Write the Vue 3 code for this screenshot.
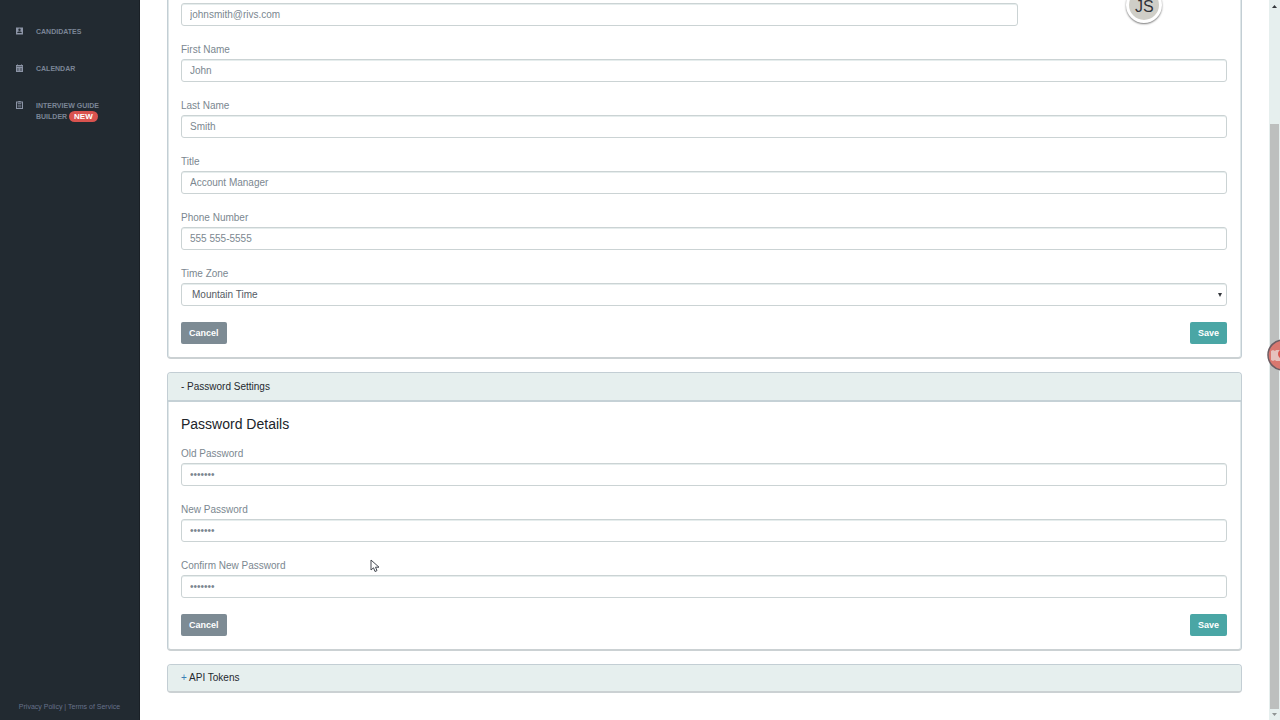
<script setup>
import { reactive } from 'vue'

const profile = reactive({
  email: 'johnsmith@rivs.com',
  zone: 'Mountain Time',
})
const fields = reactive([
  { id: 'first-name', label: 'First Name', value: 'John' },
  { id: 'last-name', label: 'Last Name', value: 'Smith' },
  { id: 'title', label: 'Title', value: 'Account Manager' },
  { id: 'phone', label: 'Phone Number', value: '555 555-5555' },
])
const passwords = reactive([
  { id: 'old-password', label: 'Old Password', value: 'passwor' },
  { id: 'new-password', label: 'New Password', value: 'passwor' },
  { id: 'confirm-password', label: 'Confirm New Password', value: 'passwor' },
])
</script>

<template>
  <div class="app">
    <aside class="sidebar">
      <nav class="nav">
        <a href="#candidates" class="nav-link">
          <svg class="nav-icon" viewBox="0 0 7 8">
            <path fill-rule="evenodd" d="M0 .5h7v7H0zM3.5 1.5a1.2 1.2 0 1 0 0 2.4 1.2 1.2 0 0 0 0-2.4M1.3 6h4.4v-.5c0-1.4-4.4-1.4-4.4 0z" />
          </svg>
          <span>CANDIDATES</span>
        </a>
        <a href="#calendar" class="nav-link">
          <svg class="nav-icon" viewBox="0 0 7 8">
            <path fill-rule="evenodd" d="M0 1h1V.4h1V1h3V.4h1V1h1v7H0zM.7 2.3v.4h5.6v-.4zM1.4 4v3h.4V4zm1.3 0v3h.4V4zm1.3 0v3h.4V4zm1.3 0v3h.4V4z" />
          </svg>
          <span>CALENDAR</span>
        </a>
        <a href="#guide" class="nav-link">
          <svg class="nav-icon" viewBox="0 0 7 8">
            <path fill-rule="evenodd" d="M0 .6h2.3a1.2 1.2 0 0 1 2.4 0H7V8H0zM1 1.600v5.400h5V1.600zM1.700 2.200h3.600v.8H1.700zm0 1.600h3.600v.8H1.700zm0 1.600h3.600v.8H1.700z" />
          </svg>
          <span>INTERVIEW GUIDE<br />BUILDER <span class="badge">NEW</span></span>
        </a>
      </nav>
      <footer class="legal">
        <a href="#privacy">Privacy Policy</a> | <a href="#terms">Terms of Service</a>
      </footer>
    </aside>

    <main class="content">
      <form class="card profile" @submit.prevent>
        <div class="email-row">
          <input v-model="profile.email" class="control email" type="email" aria-label="Email" />
          <div class="avatar-cell"><span class="avatar">JS</span></div>
        </div>
        <div v-for="f in fields" :key="f.id" class="field">
          <label :for="f.id">{{ f.label }}</label>
          <input :id="f.id" v-model="f.value" class="control" type="text" />
        </div>
        <div class="field">
          <label for="zone">Time Zone</label>
          <div class="select-wrap">
            <select id="zone" v-model="profile.zone" class="control zone">
              <option>Mountain Time</option>
            </select>
            <svg class="caret" viewBox="0 0 4 4"><path d="M0 0h4L2 4z" /></svg>
          </div>
        </div>
        <div class="actions">
          <button type="button" class="btn cancel">Cancel</button>
          <button type="submit" class="btn save">Save</button>
        </div>
      </form>

      <section class="card">
        <button type="button" class="card-head" aria-expanded="true">- Password Settings</button>
        <form class="card-body" @submit.prevent>
          <h2>Password Details</h2>
          <div v-for="p in passwords" :key="p.id" class="field">
            <label :for="p.id">{{ p.label }}</label>
            <input :id="p.id" v-model="p.value" class="control" type="password" />
          </div>
          <div class="actions">
            <button type="button" class="btn cancel">Cancel</button>
            <button type="submit" class="btn save">Save</button>
          </div>
        </form>
      </section>

      <section class="card closed">
        <button type="button" class="card-head" aria-expanded="false"><span class="plus">+</span> API Tokens</button>
      </section>
    </main>

    <div class="scrollbar">
      <svg class="arrow" viewBox="0 0 5 3"><path d="M0 3h5L2.5 0z" /></svg>
      <div class="track"><div class="thumb"></div></div>
      <svg class="arrow down" viewBox="0 0 5 3"><path d="M0 0h5L2.5 3z" /></svg>
    </div>

    <svg class="recorder" viewBox="0 0 32 32">
      <circle cx="16" cy="16" r="15" fill="#d9776f" stroke="#6b5d63" stroke-width="1.5" />
      <path d="M4 12l2-1 2 1 1-1h12v11H9l-1-1-2 1-2-1z" fill="#e5c2be" />
      <circle cx="16" cy="15" r="4" fill="#e5c2be" stroke="#d8564f" stroke-width="2" />
    </svg>
    <svg class="pointer" viewBox="0 0 10 14">
      <path d="M1 1v10l2.5-2.2L5 12.5l2-.9-1.5-3.400H9z" fill="#fff" stroke="#444951" stroke-width="1" />
    </svg>
  </div>
</template>

<style>
body {
  background: #fff;
  overflow: hidden;
}
</style>

<style scoped>
.app {
  position: relative;
  display: flex;
  height: 100vh;
  overflow: hidden;
  font: 10px/16px "Liberation Sans", Arial, sans-serif;
  color: #7b8790;
}
.app * {
  box-sizing: border-box;
}
.sidebar {
  width: 140px;
  flex: none;
  display: flex;
  flex-direction: column;
  justify-content: space-between;
  background: #222a31;
  border-right: 1px solid #1a2026;
  padding: 26px 16px 8px;
}
.nav {
  display: flex;
  flex-direction: column;
  gap: 26px;
}
.nav-link {
  display: flex;
  align-items: flex-start;
  gap: 13px;
  color: #7b8596;
  font-size: 7px;
  font-weight: 700;
  line-height: 11px;
  text-decoration: none;
}
.nav-icon {
  width: 7px;
  height: 8px;
  flex: none;
  margin-top: 1px;
  fill: #8c94a6;
}
.badge {
  display: inline-block;
  padding: 0 5px;
  border-radius: 6px;
  background: #d9534f;
  color: #fff;
  font-size: 8px;
  line-height: 11px;
}
.legal {
  font-size: 7px;
  line-height: 10px;
  text-align: center;
  white-space: nowrap;
  color: #66718a;
}
.legal a {
  color: inherit;
  text-decoration: none;
}
.content {
  flex: 1;
  min-width: 0;
  padding: 0 27px;
}
.card {
  margin-bottom: 13px;
  border: 1px solid #c3ced4;
  border-bottom: 2px solid #cbd1d3;
  border-radius: 4px;
  box-shadow: inset 1px 0 0 #dfe7e9, inset -1px 0 0 #dfe7e9;
}
.profile {
  padding: 3px 14px 13px 13px;
  border-top: 0;
  border-radius: 0 0 4px 4px;
}
.email-row {
  display: flex;
  margin-bottom: 16px;
}
.email-row .email {
  width: 80%;
}
.avatar-cell {
  flex: 1;
  display: flex;
  justify-content: center;
  padding-left: 44px;
  height: 23px;
}
.avatar {
  width: 36px;
  height: 36px;
  flex: none;
  margin-top: -16px;
  border: 3px solid #fff;
  border-radius: 50%;
  background: #cfcec7;
  box-shadow: 0 1px 2px #777;
  color: #303138;
  font-size: 16px;
  line-height: 34px;
  text-align: center;
}
.field {
  display: flex;
  flex-direction: column;
  gap: 1px;
  margin-bottom: 16px;
}
.field label {
  align-self: flex-start;
}
.control {
  width: 100%;
  height: 23px;
  margin: 0;
  padding: 0 8px;
  border: 1px solid #cbd3d4;
  border-radius: 3px;
  background: #fff;
  box-shadow: inset 0 1px 0 #e6eded;
  color: #7b8790;
  font: inherit;
  outline: none;
}
.select-wrap {
  position: relative;
  display: flex;
}
.zone {
  appearance: none;
  padding-left: 10px;
  color: #555b64;
}
.caret {
  position: absolute;
  top: 10px;
  right: 5px;
  width: 4px;
  height: 4px;
  fill: #33363b;
  pointer-events: none;
}
.actions {
  display: flex;
  justify-content: space-between;
}
.btn {
  height: 22px;
  padding: 0 8px;
  border: 0;
  border-radius: 2px;
  color: #fff;
  font: bold 9px/20px "Liberation Sans", Arial, sans-serif;
}
.cancel {
  background: #7d8b94;
}
.save {
  background: #4aa6a5;
}
.card-head {
  display: block;
  width: 100%;
  height: 29px;
  padding: 0 13px;
  border: 0;
  border-bottom: 2px solid #c5d1d6;
  border-radius: 3px 3px 0 0;
  background: #e6efee;
  color: #25292e;
  font: inherit;
  text-align: left;
}
.card-body {
  padding: 12px 14px 13px 13px;
}
h2 {
  margin: 0 0 12px;
  color: #20242a;
  font-size: 14px;
  font-weight: 400;
  line-height: 20px;
}
.closed .card-head {
  height: 26px;
  border-bottom: 0;
  border-radius: 3px;
}
.plus {
  color: #3b7fb5;
}
.scrollbar {
  width: 11px;
  flex: none;
  display: flex;
  flex-direction: column;
  align-items: center;
  justify-content: space-between;
  padding: 5px 0 4px;
  background: #e6efee;
}
.arrow {
  width: 5px;
  height: 3px;
  fill: #33363b;
}
.arrow.down {
  fill: #8f9494;
}
.track {
  flex: 1;
  width: 9px;
  margin: 4px 0;
  display: flex;
  align-items: flex-end;
}
.thumb {
  width: 100%;
  height: 84%;
  background: #bdbfbe;
}
.recorder {
  position: absolute;
  top: 339px;
  right: -19px;
  width: 32px;
  height: 32px;
}
.pointer {
  position: absolute;
  left: 370px;
  top: 559px;
  width: 10px;
  height: 14px;
}
</style>
